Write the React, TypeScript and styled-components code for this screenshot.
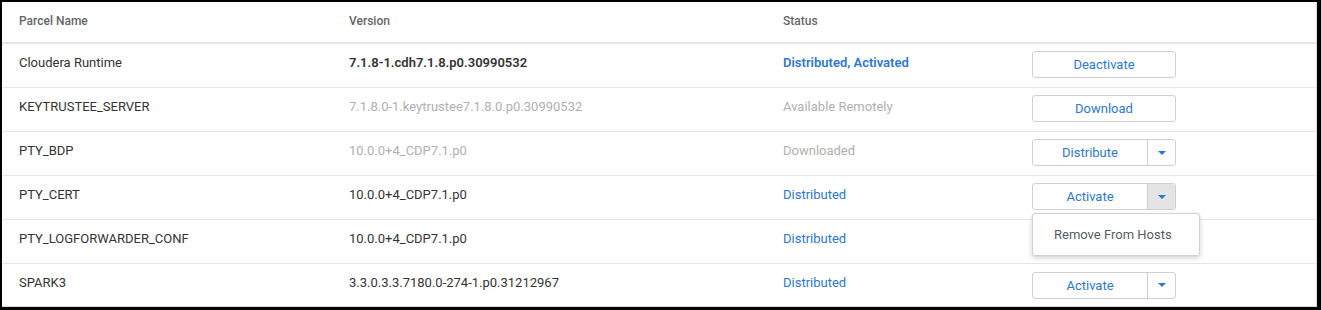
import React from 'react';
import styled, { createGlobalStyle } from 'styled-components';

const Blue = '#2b77d6';
const TextDark = '#333333';
const TextMuted = '#b0b0b0';
const Line = '#e6e6e6';

const GlobalStyle = createGlobalStyle`
  html, body {
    margin: 0;
    padding: 0;
    background: #ffffff;
  }
  body {
    font-family: Roboto, "Liberation Sans", Arial, sans-serif;
    color: ${TextDark};
  }
`;

const Frame = styled.div`
  box-sizing: border-box;
  width: 1321px;
  height: 310px;
  border-style: solid;
  border-color: #000;
  border-width: 2px 4px 3px 2px;
  overflow: hidden;
`;

const Inner = styled.div`
  box-sizing: border-box;
  height: 100%;
  border-right: 1px solid #dcdcdc;
  border-bottom: 1px solid #dcdcdc;
`;

const Row = styled.div<{ $head?: boolean }>`
  display: grid;
  grid-template-columns: 330px 434px 249px 1fr;
  align-items: center;
  box-sizing: border-box;
  padding-left: 17px;
  height: ${(p) => (p.$head ? '42px' : '44px')};
  border-bottom: ${(p) => (p.$head ? `2px solid ${Line}` : `1px solid ${Line}`)};
  &:last-child {
    border-bottom: none;
  }
`;

const HeadCell = styled.div`
  font-size: 12px;
  font-weight: 500;
  color: #666;
  padding-bottom: 2px;
`;

const Cell = styled.div<{ $tone?: 'dark' | 'muted' | 'blue'; $bold?: boolean }>`
  font-size: 13px;
  font-weight: ${(p) => (p.$bold ? 600 : 400)};
  color: ${(p) => (p.$tone === 'muted' ? TextMuted : p.$tone === 'blue' ? Blue : TextDark)};
  padding-bottom: 7px;
  white-space: nowrap;
`;

const ActionCell = styled.div`
  position: relative;
  display: flex;
  align-items: center;
  padding-bottom: 2px;
`;

const ButtonGroup = styled.div`
  display: flex;
  width: 144px;
  height: 27px;
  box-sizing: border-box;
  border: 1px solid #cfcfcf;
  border-radius: 3px;
  background: #fff;
  overflow: hidden;
`;

const MainButton = styled.button`
  flex: 1;
  border: none;
  background: transparent;
  color: ${Blue};
  font-family: inherit;
  font-size: 13px;
  padding: 0;
  cursor: pointer;
`;

const Toggle = styled.button<{ $open?: boolean }>`
  width: 28px;
  border: none;
  border-left: 1px solid #cfcfcf;
  background: ${(p) => (p.$open ? '#e4e4e4' : 'transparent')};
  display: flex;
  align-items: center;
  justify-content: center;
  padding: 0;
  cursor: pointer;
`;

const Caret = styled.span`
  width: 0;
  height: 0;
  border-left: 4px solid transparent;
  border-right: 4px solid transparent;
  border-top: 4px solid ${Blue};
`;

const Menu = styled.div`
  position: absolute;
  left: 0;
  top: 30px;
  z-index: 2;
  width: 168px;
  height: 43px;
  box-sizing: border-box;
  background: #fff;
  border: 1px solid #d0d0d0;
  border-radius: 3px;
  box-shadow: 0 2px 5px rgba(0, 0, 0, 0.18);
  display: flex;
  align-items: center;
  padding-left: 21px;
`;

const MenuItem = styled.span`
  font-size: 13px;
  color: #555c66;
`;

type Parcel = {
  name: string;
  version: string;
  versionTone: 'dark' | 'muted';
  versionBold?: boolean;
  status: string;
  statusTone: 'muted' | 'blue';
  statusBold?: boolean;
  action: string;
  split?: boolean;
  open?: boolean;
};

const parcels: Parcel[] = [
  {
    name: 'Cloudera Runtime',
    version: '7.1.8-1.cdh7.1.8.p0.30990532',
    versionTone: 'dark',
    versionBold: true,
    status: 'Distributed, Activated',
    statusTone: 'blue',
    statusBold: true,
    action: 'Deactivate',
  },
  {
    name: 'KEYTRUSTEE_SERVER',
    version: '7.1.8.0-1.keytrustee7.1.8.0.p0.30990532',
    versionTone: 'muted',
    status: 'Available Remotely',
    statusTone: 'muted',
    action: 'Download',
  },
  {
    name: 'PTY_BDP',
    version: '10.0.0+4_CDP7.1.p0',
    versionTone: 'muted',
    status: 'Downloaded',
    statusTone: 'muted',
    action: 'Distribute',
    split: true,
  },
  {
    name: 'PTY_CERT',
    version: '10.0.0+4_CDP7.1.p0',
    versionTone: 'dark',
    status: 'Distributed',
    statusTone: 'blue',
    action: 'Activate',
    split: true,
    open: true,
  },
  {
    name: 'PTY_LOGFORWARDER_CONF',
    version: '10.0.0+4_CDP7.1.p0',
    versionTone: 'dark',
    status: 'Distributed',
    statusTone: 'blue',
    action: 'Activate',
    split: true,
  },
  {
    name: 'SPARK3',
    version: '3.3.0.3.3.7180.0-274-1.p0.31212967',
    versionTone: 'dark',
    status: 'Distributed',
    statusTone: 'blue',
    action: 'Activate',
    split: true,
  },
];

// PTY_LOGFORWARDER_CONF's button sits under the open menu
const Hidden = styled.div`
  visibility: hidden;
`;

export default function App() {
  return (
    <>
      <GlobalStyle />
      <Frame>
        <Inner>
          <Row $head>
            <HeadCell>Parcel Name</HeadCell>
            <HeadCell>Version</HeadCell>
            <HeadCell>Status</HeadCell>
            <div />
          </Row>
          {parcels.map((p, i) => {
            const group = (
              <ButtonGroup>
                <MainButton>{p.action}</MainButton>
                {p.split && (
                  <Toggle $open={p.open}>
                    <Caret />
                  </Toggle>
                )}
              </ButtonGroup>
            );
            return (
              <Row key={p.name} style={{ position: 'relative', zIndex: parcels.length - i }}>
                <Cell>{p.name}</Cell>
                <Cell $tone={p.versionTone} $bold={p.versionBold}>
                  {p.version}
                </Cell>
                <Cell $tone={p.statusTone} $bold={p.statusBold}>
                  {p.status}
                </Cell>
                <ActionCell>
                  {i === 4 ? <Hidden>{group}</Hidden> : group}
                  {p.open && (
                    <Menu>
                      <MenuItem>Remove From Hosts</MenuItem>
                    </Menu>
                  )}
                </ActionCell>
              </Row>
            );
          })}
        </Inner>
      </Frame>
    </>
  );
}
